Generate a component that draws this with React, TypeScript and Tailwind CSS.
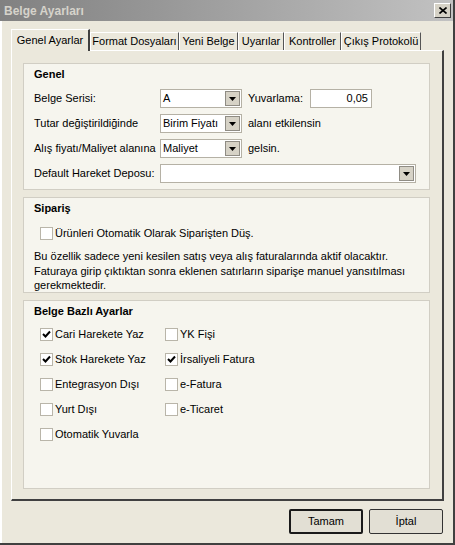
import React from "react";

const font = { fontFamily: '"Liberation Sans", Arial, sans-serif' };

const tabs = [
  { t: "Genel Ayarlar", w: "w-[79px]" },
  { t: "Format Dosyaları", w: "w-[89px]" },
  { t: "Yeni Belge", w: "w-[59px]" },
  { t: "Uyarılar", w: "w-[46px]" },
  { t: "Kontroller", w: "w-[57px]" },
  { t: "Çıkış Protokolü", w: "w-[80px]" },
];

function Arrow() {
  return (
    <svg width="7" height="4" viewBox="0 0 7 4">
      <path d="M0 0h7L3.5 4z" fill="#000" />
    </svg>
  );
}

function Combo({ value, width }: { value: string; width: string }) {
  return (
    <div className={`flex h-[19px] items-center border border-[#b5b1a5] bg-white ${width}`}>
      <span className="flex-1 truncate pl-[2px] text-[11px]">{value}</span>
      <span className="mr-[1px] flex h-[15px] w-[15px] items-center justify-center border border-[#8f8c84] bg-[#d6d2c6]">
        <Arrow />
      </span>
    </div>
  );
}

function Check({ label, checked = false }: { label: string; checked?: boolean }) {
  return (
    <div className="flex h-[13px] items-center gap-[2px]">
      <span className="flex h-[13px] w-[13px] items-center justify-center border border-[#b9b5a9] bg-white">
        {checked ? (
          <svg width="9" height="9" viewBox="0 0 9 9">
            <path d="M1 4l2.5 2.5L8 1.5" stroke="#000" strokeWidth="2" fill="none" />
          </svg>
        ) : null}
      </span>
      <span className="text-[11px] leading-none">{label}</span>
    </div>
  );
}

function Group({ title, height, children }: { title: string; height: string; children: React.ReactNode }) {
  return (
    <div className={`border border-[#d1cec4] bg-[#f6f5ee] px-[10px] ${height}`}>
      <div className="pt-[3px] text-[11px] font-bold leading-[14px]">{title}</div>
      {children}
    </div>
  );
}

export default function App() {
  return (
    <div style={font} className="flex h-[545px] w-[455px] flex-col border-b-2 border-r-2 border-b-[#404040] border-r-[#404040] bg-[#ebe8dc] text-black">
      <div className="flex h-[21px] items-center justify-between bg-gradient-to-r from-[#818181] to-[#c2c2c2] pl-[4px] pr-[2px]">
        <span className="text-[12px] font-bold text-[#d6d3cb]">Belge Ayarları</span>
        <span className="flex h-[15px] w-[17px] items-center justify-center border border-b-[#404040] border-l-white border-r-[#404040] border-t-white bg-[#d6d2c6]">
          <svg width="8" height="7" viewBox="0 0 8 7">
            <path d="M0.5 0.5l7 6M7.5 0.5l-7 6" stroke="#000" strokeWidth="1.6" />
          </svg>
        </span>
      </div>

      <div className="flex flex-1 flex-col border-l-2 border-l-white pl-[9px] pr-[9px]">
        <div className="mt-[8px] flex h-[21px] items-end">
          {tabs.map((tab, i) =>
            i === 0 ? (
              <div key={tab.t} className={`relative z-10 -mb-[1px] flex h-[22px] items-center justify-center border-l border-t border-r-2 border-l-white border-t-white border-r-[#404040] bg-[#ebe8dc] text-[11px] ${tab.w}`}>
                {tab.t}
              </div>
            ) : (
              <div key={tab.t} className={`flex h-[18px] items-center justify-center border-l border-t border-r border-l-white border-t-white border-r-[#555] text-[11px] ${tab.w}`}>
                {tab.t}
              </div>
            )
          )}
        </div>

        <div className="flex h-[451px] flex-col gap-[7px] border-b-2 border-l border-r-2 border-t border-b-[#404040] border-l-white border-r-[#404040] border-t-white pl-[11px] pr-[12px] pt-[12px]">
          <Group title="Genel" height="h-[127px]">
            <div className="mt-[8px] flex flex-col gap-[6px] text-[11px]">
              <div className="flex h-[19px] items-center">
                <span className="w-[126px]">Belge Serisi:</span>
                <Combo value="A" width="w-[82px]" />
                <span className="ml-[6px] w-[62px]">Yuvarlama:</span>
                <div className="flex h-[19px] w-[62px] items-center justify-end border border-[#b5b1a5] bg-white pr-[3px]">0,05</div>
              </div>
              <div className="flex h-[19px] items-center">
                <span className="w-[126px]">Tutar değiştirildiğinde</span>
                <Combo value="Birim Fiyatı" width="w-[82px]" />
                <span className="ml-[6px]">alanı etkilensin</span>
              </div>
              <div className="flex h-[19px] items-center">
                <span className="w-[126px]">Alış fiyatı/Maliyet alanına</span>
                <Combo value="Maliyet" width="w-[82px]" />
                <span className="ml-[6px]">gelsin.</span>
              </div>
              <div className="flex h-[19px] items-center">
                <span className="w-[126px]">Default Hareket Deposu:</span>
                <Combo value="" width="w-[256px]" />
              </div>
            </div>
          </Group>

          <Group title="Sipariş" height="h-[96px]">
            <div className="ml-[6px] mt-[12px]">
              <Check label="Ürünleri Otomatik Olarak Siparişten Düş." />
            </div>
            <p className="mt-[9px] text-[11px] leading-[14.5px]">
              Bu özellik sadece yeni kesilen satış veya alış faturalarında aktif olacaktır.
              <br />
              Faturaya girip çıktıktan sonra eklenen satırların siparişe manuel yansıtılması
              <br />
              gerekmektedir.
            </p>
          </Group>

          <Group title="Belge Bazlı Ayarlar" height="h-[189px]">
            <div className="ml-[6px] mt-[10px] grid grid-cols-[125px_1fr] gap-y-[12px]">
              <Check label="Cari Harekete Yaz" checked />
              <Check label="YK Fişi" />
              <Check label="Stok Harekete Yaz" checked />
              <Check label="İrsaliyeli Fatura" checked />
              <Check label="Entegrasyon Dışı" />
              <Check label="e-Fatura" />
              <Check label="Yurt Dışı" />
              <Check label="e-Ticaret" />
              <Check label="Otomatik Yuvarla" />
            </div>
          </Group>
        </div>

        <div className="mt-[8px] flex justify-end gap-[6px] pr-[1px]">
          <button className="h-[25px] w-[74px] rounded-[2px] border-2 border-[#1a1a1a] bg-[#e2dfd4] text-[11px]">Tamam</button>
          <button className="h-[25px] w-[74px] rounded-[2px] border border-[#333] bg-[#e2dfd4] text-[11px]">İptal</button>
        </div>
      </div>
    </div>
  );
}
